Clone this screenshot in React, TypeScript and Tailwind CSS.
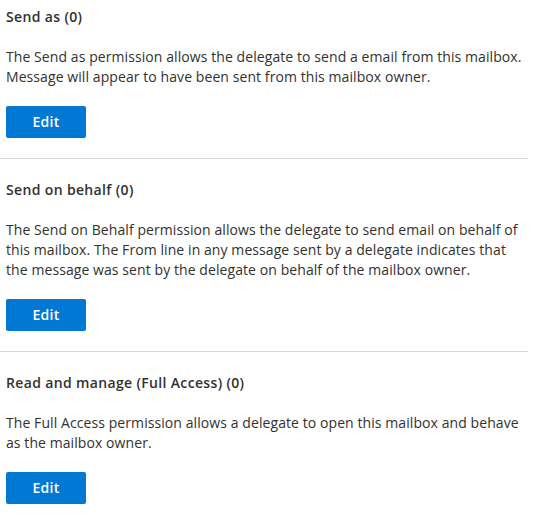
import React from 'react';

const permissions = [
  {
    title: 'Send as (0)',
    lines: [
      'The Send as permission allows the delegate to send a email from this mailbox.',
      'Message will appear to have been sent from this mailbox owner.',
    ],
  },
  {
    title: 'Send on behalf (0)',
    lines: [
      'The Send on Behalf permission allows the delegate to send email on behalf of',
      'this mailbox. The From line in any message sent by a delegate indicates that',
      'the message was sent by the delegate on behalf of the mailbox owner.',
    ],
  },
  {
    title: 'Read and manage (Full Access) (0)',
    lines: [
      'The Full Access permission allows a delegate to open this mailbox and behave',
      'as the mailbox owner.',
    ],
  },
];

const App = () => {
  return (
    <div className="w-[528px] bg-white text-[#323130] font-['Segoe_UI','Open_Sans',sans-serif] text-[14px] leading-[20px]">
      {permissions.map((p, index) => (
        <section
          key={index}
          className={`px-[6px] pb-[20px] ${index === 0 ? 'pt-[7px]' : 'pt-[21px]'} ${
            index < permissions.length - 1 ? 'border-b border-[#d6d6d6]' : ''
          }`}
        >
          <h3 className="font-semibold tracking-[0.35px]">{p.title}</h3>
          <p className="mt-[20px] whitespace-nowrap tracking-[0.08px]">
            {p.lines.map((line, i) => (
              <React.Fragment key={i}>
                {line}
                {i < p.lines.length - 1 && <br />}
              </React.Fragment>
            ))}
          </p>
          <button className="mt-[19px] w-[80px] h-[32px] rounded-[2px] bg-[#0078d4] text-white font-semibold tracking-[0.3px]">
            Edit
          </button>
        </section>
      ))}
    </div>
  );
};

export default App;
